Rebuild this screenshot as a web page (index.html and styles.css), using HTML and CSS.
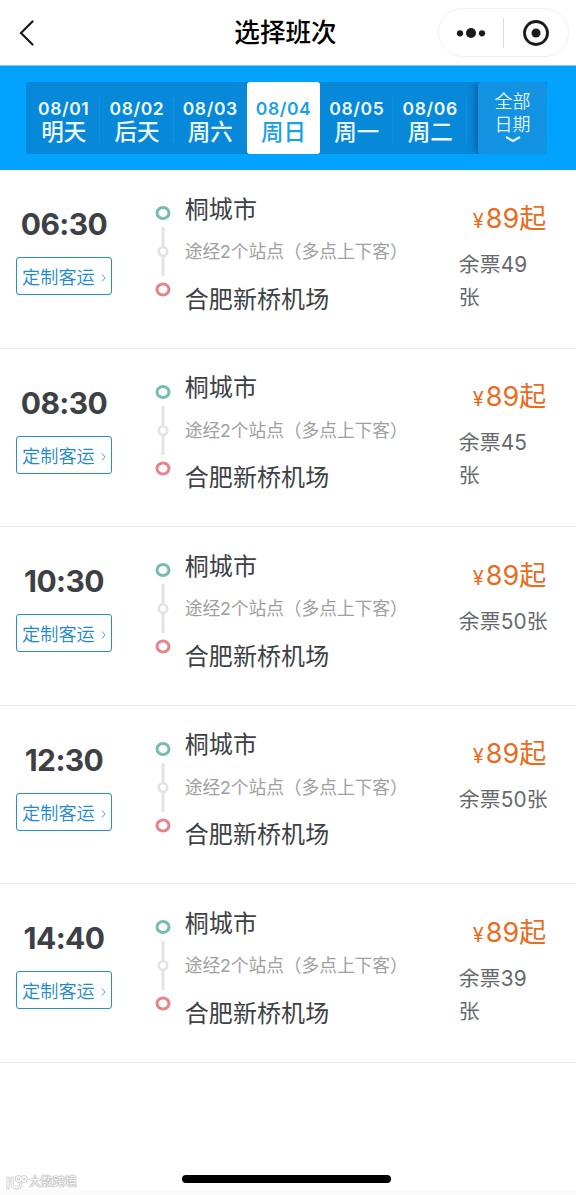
FILE: index.html
```html
<!DOCTYPE html>
<html lang="zh-CN">
<head>
    <meta charset="UTF-8">
    <meta name="viewport" content="width=device-width, initial-scale=1.0">
    <title>选择班次</title>
    <link rel="stylesheet" href="styles.css">
</head>
<body>
    <!-- Shared symbols -->
    <svg class="symbols" width="0" height="0">
        <symbol id="route" viewBox="0 0 16 92">
            <path d="M8 22v49" stroke="#e3e3e3" stroke-width="3"/>
            <ellipse cx="8" cy="8" rx="6" ry="5.6" fill="#fff" stroke="#75bdb0" stroke-width="3"/>
            <circle cx="8" cy="46.5" r="4.2" fill="#fff" stroke="#e3e3e3" stroke-width="2.6"/>
            <ellipse cx="8" cy="84.5" rx="6" ry="5.6" fill="#fff" stroke="#e6838b" stroke-width="3"/>
        </symbol>
        <symbol id="arrow" viewBox="0 0 5 8">
            <path d="M1 .5L4 4 1 7.5" fill="none" stroke="#57a6d6" stroke-width="1"/>
        </symbol>
    </svg>

    <header class="nav-bar">
        <svg class="back" width="16" height="28" viewBox="0 0 16 28">
            <path d="M14.5 2.5L3 14l11.5 11.5" fill="none" stroke="#1a1a1a" stroke-width="2.2" stroke-linecap="round"/>
        </svg>
        <h1 class="nav-title">选择班次</h1>
        <div class="capsule">
            <svg class="dots" width="30" height="12" viewBox="0 0 30 12">
                <circle cx="4" cy="6.3" r="3.1"/>
                <circle cx="15" cy="6" r="5"/>
                <circle cx="26" cy="6.3" r="3.1"/>
            </svg>
            <span class="capsule-line"></span>
            <svg class="target" width="26" height="26" viewBox="0 0 26 26">
                <circle cx="13" cy="13" r="11.5" fill="none" stroke="#1a1a1a" stroke-width="2.8"/>
                <circle cx="13" cy="13" r="4.5"/>
            </svg>
        </div>
    </header>

    <section class="date-section">
        <div class="date-bar">
            <div class="date-list">
                <div class="date"><span class="day">08/01</span><span class="week">明天</span></div>
                <div class="date"><span class="day">08/02</span><span class="week">后天</span></div>
                <div class="date"><span class="day">08/03</span><span class="week">周六</span></div>
                <div class="date active"><span class="day">08/04</span><span class="week">周日</span></div>
                <div class="date"><span class="day">08/05</span><span class="week">周一</span></div>
                <div class="date"><span class="day">08/06</span><span class="week">周二</span></div>
            </div>
            <div class="all-dates">
                <span>全部<br>日期</span>
                <svg width="16" height="7" viewBox="0 0 16 7">
                    <path d="M1 1l7 4 7-4" fill="none" stroke="#e3f3fd" stroke-width="2.2"/>
                </svg>
            </div>
        </div>
    </section>

    <main class="trips">
        <article class="trip">
            <div class="depart">
                <div class="time">06:30</div>
                <div class="tag">定制客运<svg width="5" height="8"><use href="#arrow"/></svg></div>
            </div>
            <svg class="route" width="16" height="92"><use href="#route"/></svg>
            <div class="stations">
                <div class="station">桐城市</div>
                <div class="via">途经2个站点（多点上下客）</div>
                <div class="station">合肥新桥机场</div>
            </div>
            <div class="fare">
                <div class="price"><small>¥</small>89<span>起</span></div>
                <div class="left">余票49<br>张</div>
            </div>
        </article>
        <article class="trip">
            <div class="depart">
                <div class="time">08:30</div>
                <div class="tag">定制客运<svg width="5" height="8"><use href="#arrow"/></svg></div>
            </div>
            <svg class="route" width="16" height="92"><use href="#route"/></svg>
            <div class="stations">
                <div class="station">桐城市</div>
                <div class="via">途经2个站点（多点上下客）</div>
                <div class="station">合肥新桥机场</div>
            </div>
            <div class="fare">
                <div class="price"><small>¥</small>89<span>起</span></div>
                <div class="left">余票45<br>张</div>
            </div>
        </article>
        <article class="trip">
            <div class="depart">
                <div class="time">10:30</div>
                <div class="tag">定制客运<svg width="5" height="8"><use href="#arrow"/></svg></div>
            </div>
            <svg class="route" width="16" height="92"><use href="#route"/></svg>
            <div class="stations">
                <div class="station">桐城市</div>
                <div class="via">途经2个站点（多点上下客）</div>
                <div class="station">合肥新桥机场</div>
            </div>
            <div class="fare">
                <div class="price"><small>¥</small>89<span>起</span></div>
                <div class="left">余票50张</div>
            </div>
        </article>
        <article class="trip">
            <div class="depart">
                <div class="time">12:30</div>
                <div class="tag">定制客运<svg width="5" height="8"><use href="#arrow"/></svg></div>
            </div>
            <svg class="route" width="16" height="92"><use href="#route"/></svg>
            <div class="stations">
                <div class="station">桐城市</div>
                <div class="via">途经2个站点（多点上下客）</div>
                <div class="station">合肥新桥机场</div>
            </div>
            <div class="fare">
                <div class="price"><small>¥</small>89<span>起</span></div>
                <div class="left">余票50张</div>
            </div>
        </article>
        <article class="trip">
            <div class="depart">
                <div class="time">14:40</div>
                <div class="tag">定制客运<svg width="5" height="8"><use href="#arrow"/></svg></div>
            </div>
            <svg class="route" width="16" height="92"><use href="#route"/></svg>
            <div class="stations">
                <div class="station">桐城市</div>
                <div class="via">途经2个站点（多点上下客）</div>
                <div class="station">合肥新桥机场</div>
            </div>
            <div class="fare">
                <div class="price"><small>¥</small>89<span>起</span></div>
                <div class="left">余票39<br>张</div>
            </div>
        </article>
    </main>

    <footer class="bottom">
        <div class="watermark">
            <svg width="22" height="15" viewBox="0 0 22 15" fill="none" stroke-linecap="round">
                <g stroke="#c4c4c4" stroke-width="3">
                    <path d="M2 3v10M6 3v4c-1 7 8 8 9 2"/>
                    <circle cx="12.5" cy="4" r="2.2"/>
                    <circle cx="18" cy="4" r="2.2"/>
                </g>
                <g stroke="#fff" stroke-width="1.4">
                    <path d="M2 3v10M6 3v4c-1 7 8 8 9 2"/>
                    <circle cx="12.5" cy="4" r="2.2"/>
                    <circle cx="18" cy="4" r="2.2"/>
                </g>
            </svg>
            <span>大数跨境</span>
        </div>
        <div class="home-bar"></div>
    </footer>
</body>
</html>
```
FILE: styles.css
```css
* {
    box-sizing: border-box;
}
body {
    margin: 0;
    height: 1195px;
    display: flex;
    flex-direction: column;
    overflow: hidden;
    background-color: #fff;
    color: #3d4145;
    font-family: Inter, "Noto Sans CJK SC", sans-serif;
}
svg {
    display: block;
    flex: none;
}
.symbols {
    position: absolute;
}

/* top bar */
.nav-bar {
    display: grid;
    grid-template-columns: 1fr auto 1fr;
    align-items: center;
    height: 66px;
    padding: 0 7px 0 18px;
    border-bottom: 1px solid #8bc9ef;
    flex: none;
}
.nav-title {
    margin: 0 7px 0 -9px;
    color: #000;
    font-size: 25.6px;
    line-height: 36px;
    font-weight: 500;
    padding-top: 1px;
}
.capsule {
    justify-self: end;
    display: flex;
    align-items: center;
    width: 131px;
    height: 49px;
    padding-left: 17px;
    border: 1px solid #f1f1f1;
    border-radius: 25px;
    fill: #1a1a1a;
}
.capsule-line {
    width: 1px;
    height: 30px;
    margin: 0 19px 0 17px;
    background-color: #dcdcdc;
}

/* dates */
.date-section {
    height: 104px;
    padding: 16px 29px 0 26px;
    background-color: #02a2ff;
    flex: none;
}
.date-bar {
    display: flex;
    height: 72px;
    border-radius: 3px;
    background-color: #0888d8;
}
.date-list {
    display: flex;
    width: 452px;
    padding-left: 1px;
    overflow: hidden;
}
.date {
    display: flex;
    flex-direction: column;
    align-items: center;
    width: 73.3px;
    flex: none;
    padding: 16px 0 0;
    color: #eefaff;
    background: linear-gradient(#1590dc, #1590dc) right 15px / 1px 46px no-repeat;
}
.date.active {
    border-radius: 3px;
    color: #1a9fe9;
    background: #fff;
}
.day {
    font-size: 17.5px;
    line-height: 22px;
    font-weight: 600;
    letter-spacing: 0.6px;
}
.week {
    font-size: 22.5px;
    line-height: 23px;
    font-weight: 500;
}
.all-dates {
    display: flex;
    flex-direction: column;
    align-items: center;
    width: 69px;
    padding-top: 9px;
    border-radius: 3px;
    background-color: #1492e2;
    box-shadow: -2px 0 7px rgba(0, 50, 100, 0.5);
    clip-path: inset(0 0 0 -12px);
    color: #e3f3fd;
    font-size: 18px;
    line-height: 22.5px;
    font-weight: 350;
}

/* trip rows */
.trips {
    flex: none;
}
.trip {
    display: flex;
    height: 178.5px;
    border-bottom: 1px solid #e9e9e9;
}
.depart {
    width: 96px;
    margin: 34px 39px 0 16px;
}
.time {
    height: 40px;
    line-height: 40px;
    font-size: 30px;
    font-weight: 700;
    letter-spacing: -0.6px;
    text-align: center;
}
.tag {
    display: flex;
    align-items: center;
    gap: 6px;
    height: 38px;
    margin-top: 13px;
    padding-left: 5px;
    border: 1.5px solid #2390d0;
    border-radius: 3px;
    color: #1e8acb;
    font-size: 18.2px;
    font-weight: 350;
    white-space: nowrap;
}
.tag svg {
    margin-top: 4px;
}
.route {
    margin: 35px 14.5px 0 4px;
}
.stations {
    width: 274px;
    margin-left: -0.8px;
    padding-top: 21.5px;
    font-weight: 390;
    white-space: nowrap;
}
.station {
    font-size: 24px;
    line-height: 36px;
    letter-spacing: 0.1px;
}
.via {
    margin: 10.5px 0 16.5px;
    color: #a0a0a0;
    font-size: 17.8px;
    line-height: 27px;
    letter-spacing: -0.1px;
}
.fare {
    width: 100px;
    padding-top: 28.5px;
}
.price {
    padding-left: 14px;
    color: #ea6c20;
    font-size: 27px;
    line-height: 40px;
}
.price small {
    margin-right: 2px;
    font-size: 20px;
}
.left {
    margin-top: 7px;
    color: #66696c;
    font-size: 20.8px;
    line-height: 33px;
    font-weight: 390;
    letter-spacing: 0.2px;
    white-space: nowrap;
}

/* bottom */
.bottom {
    display: grid;
    grid-template-columns: 182px 209px;
    flex: 1;
    align-items: end;
    border-bottom: 5px solid #fafafa;
}
.watermark {
    display: flex;
    align-items: center;
    gap: 1px;
    padding-left: 6px;
    color: #fff;
    font-size: 12px;
    line-height: 16px;
    text-shadow: 0 0 1px #999, 0 0 1px #999, 0 0 2px #aaa;
}
.home-bar {
    height: 8px;
    margin-bottom: 7px;
    border-radius: 4px;
    background-color: #000;
}
```
